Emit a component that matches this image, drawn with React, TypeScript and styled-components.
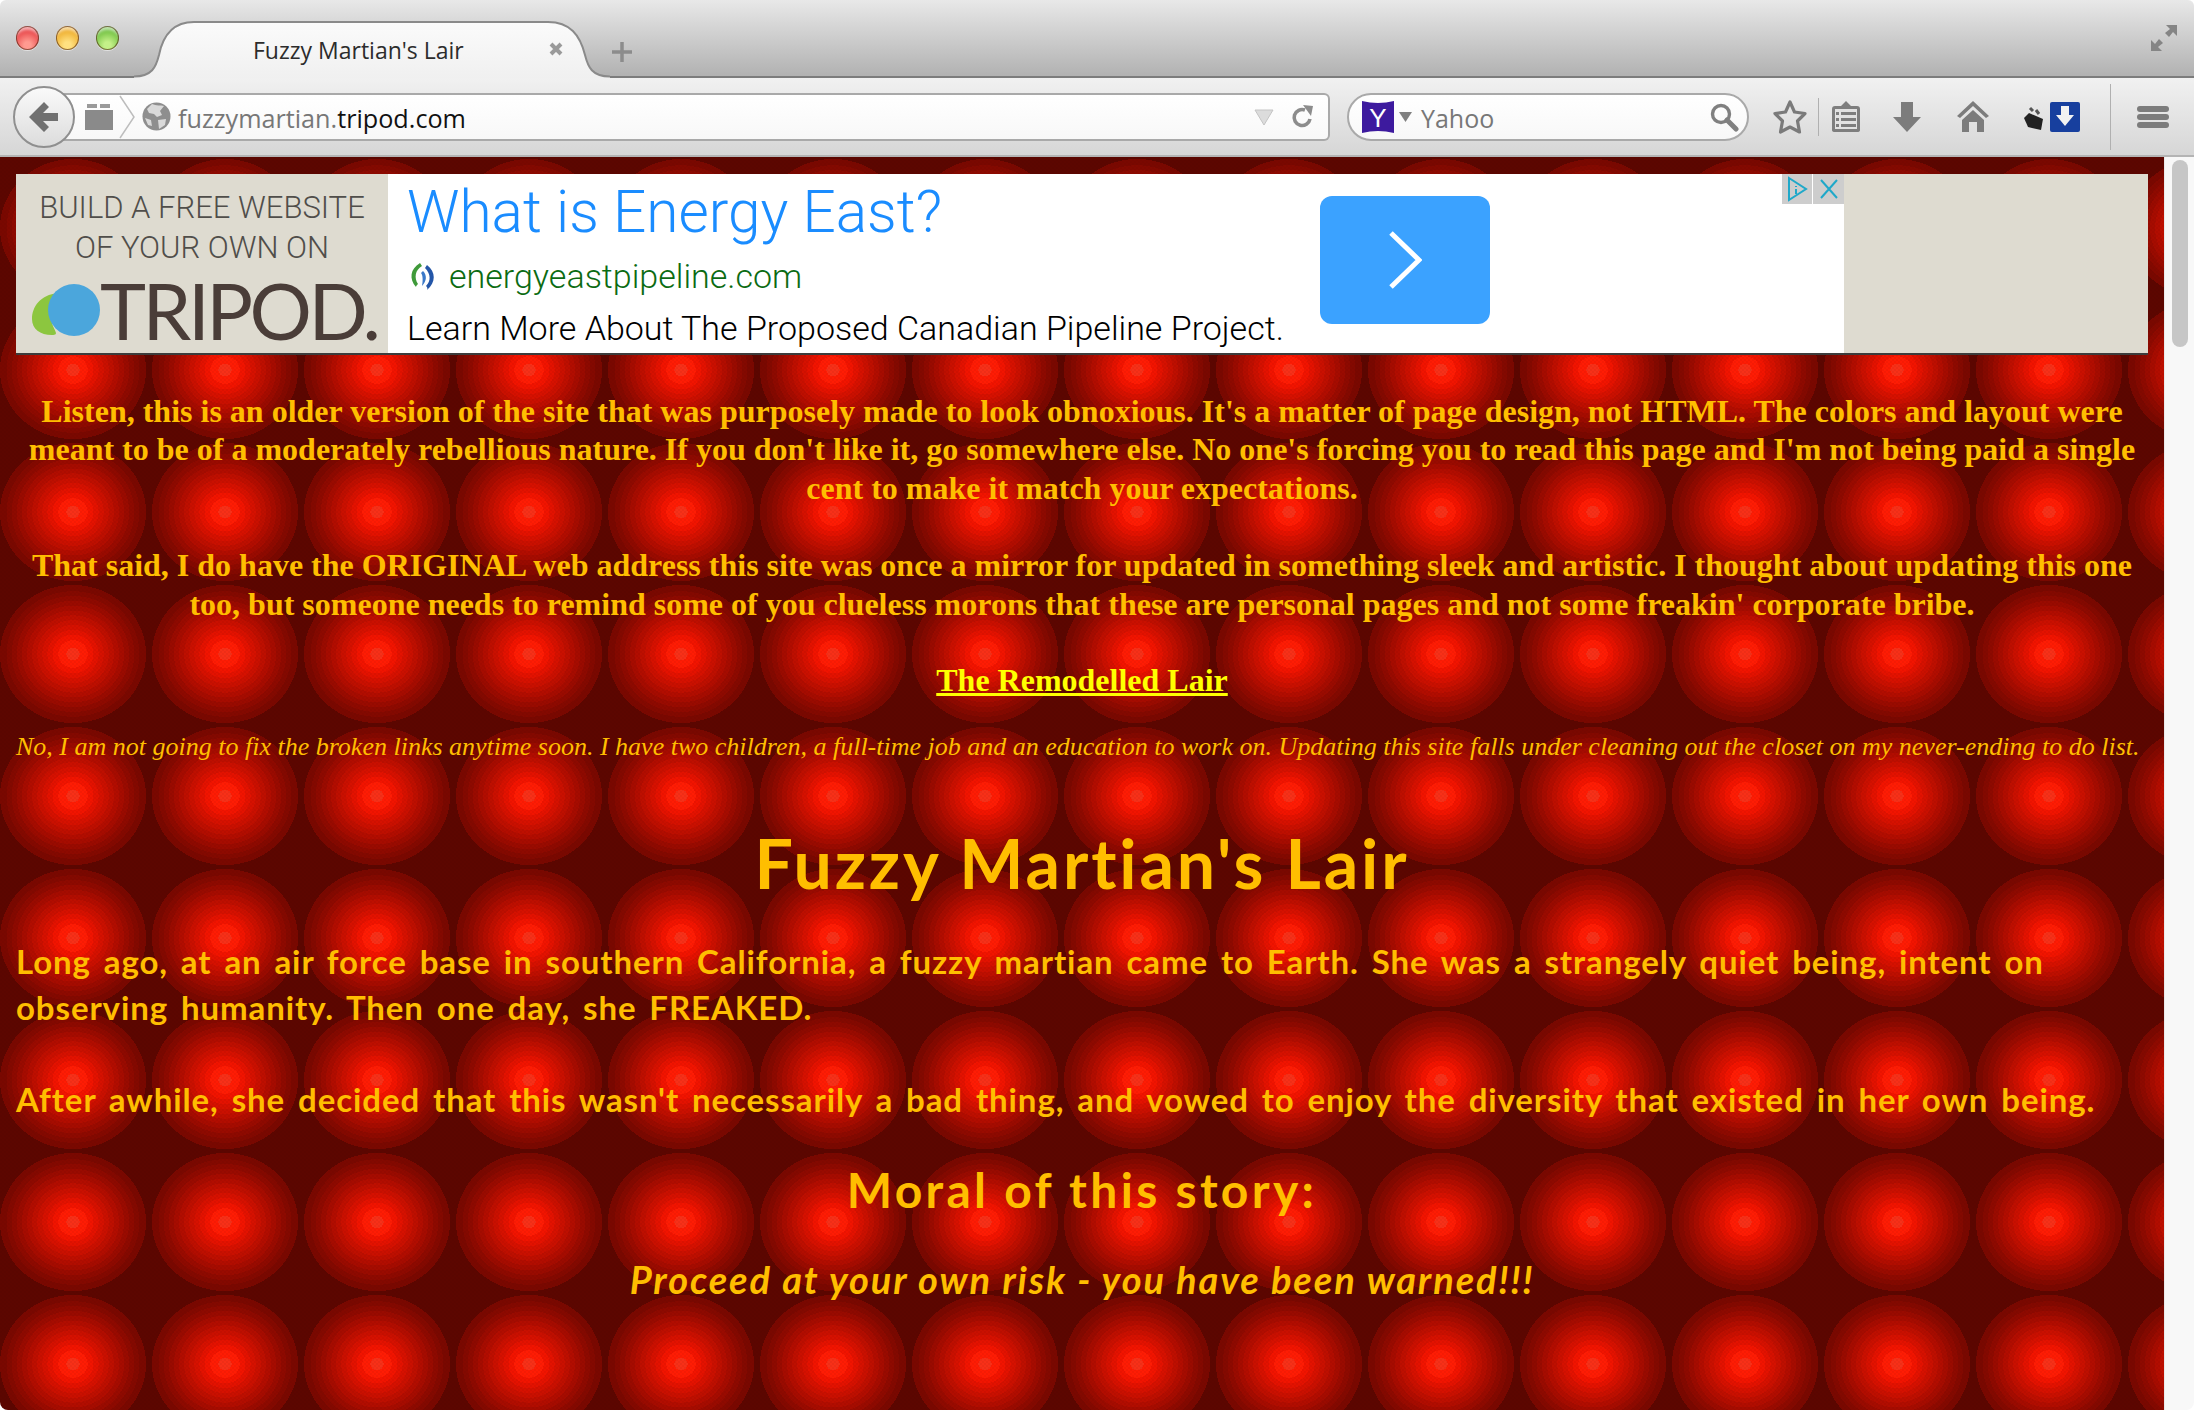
import React from 'react';
import styled, { createGlobalStyle } from 'styled-components';

const Global = createGlobalStyle`
  html, body { margin: 0; padding: 0; background: #fff; overflow: hidden; }
`;

const Browser = styled.div`
  width: 2194px;
  height: 1410px;
  display: flex;
  flex-direction: column;
  overflow: hidden;
  border-radius: 6px 6px 8px 8px;
`;

const TabStrip = styled.div`
  height: 78px;
  flex: none;
  display: flex;
  align-items: flex-end;
  position: relative;
  z-index: 2;
  box-sizing: border-box;
  padding-left: 16px;
  background: linear-gradient(#e8e8e8, #b0b0b0);
  box-shadow: inset 0 -2px 0 #7c7c7c;
`;

const Lights = styled.div`
  display: flex;
  gap: 17px;
  align-self: flex-start;
  margin-top: 26px;
  width: 118px;
  flex: none;
`;

const Light = styled.span<{ $c: string; $d: string }>`
  width: 23px;
  height: 24px;
  border-radius: 50%;
  background: radial-gradient(circle at 50% 80%, ${(p) => p.$c} 15%, ${(p) => p.$d} 85%);
  box-shadow: inset 0 0 0 1px rgba(70, 30, 10, 0.6), inset 0 6px 3px -2px rgba(255, 255, 255, 0.6), 0 1px 0 rgba(255, 255, 255, 0.5);
`;

const Tab = styled.div`
  position: relative;
  width: 476px;
  height: 57px;
  flex: none;
  display: flex;
  align-items: center;
  box-sizing: border-box;
  padding: 1px 0 0 119px;
`;

const TabShape = styled.svg`
  position: absolute;
  inset: 0;
  width: 100%;
  height: 100%;
`;

const TabTitle = styled.span`
  position: relative;
  font: 400 23px 'Open Sans', sans-serif;
  color: #2c2c2c;
  width: 295px;
  white-space: nowrap;
`;

const TabClose = styled.svg`
  position: relative;
  width: 16px;
  height: 16px;
  margin-top: -2px;
`;

const PlusIcon = styled.svg`
  width: 22px;
  height: 22px;
  margin: 0 0 15px 1px;
`;

const FullscreenIcon = styled.svg`
  position: absolute;
  right: 16px;
  top: 24px;
  width: 28px;
  height: 28px;
`;

const NavBar = styled.div`
  height: 79px;
  flex: none;
  display: flex;
  align-items: center;
  box-sizing: border-box;
  padding: 0 0 0 13px;
  background: linear-gradient(#f1f1f1, #d6d6d6);
  border-bottom: 2px solid #b4b4b4;
`;

const BackButton = styled.div`
  position: relative;
  z-index: 1;
  width: 62px;
  height: 62px;
  flex: none;
  box-sizing: border-box;
  border-radius: 50%;
  border: 2px solid #8f8f8f;
  background: linear-gradient(#fafafa, #dcdcdc);
  display: flex;
  align-items: center;
  justify-content: center;
`;

const UrlBar = styled.div`
  width: 1277px;
  height: 48px;
  margin-left: -22px;
  flex: none;
  display: flex;
  align-items: center;
  box-sizing: border-box;
  padding-left: 31px;
  background: linear-gradient(#fff, #f8f8f8);
  border: 2px solid #a9a9a9;
  border-left: none;
  border-radius: 0 6px 6px 0;
`;

const UrlText = styled.span`
  font: 400 25.2px 'Open Sans', sans-serif;
  color: #777;
  margin: 2px 0 0 7px;
  width: 1076px;
  flex: none;
  b { font-weight: 400; color: #111; }
`;

const SearchBar = styled.div`
  width: 402px;
  height: 48px;
  margin-left: 17px;
  flex: none;
  display: flex;
  align-items: center;
  box-sizing: border-box;
  padding-left: 13px;
  background: linear-gradient(#fff, #f8f8f8);
  border: 2px solid #a9a9a9;
  border-radius: 24px;
`;

const SearchText = styled.span`
  font: 400 25px 'Open Sans', sans-serif;
  color: #777;
  margin: 2px 0 0 9px;
  width: 288px;
  flex: none;
`;

const ToolIcon = styled.svg<{ $w: number; $ml: number }>`
  width: ${(p) => p.$w}px;
  height: 36px;
  flex: none;
  margin-left: ${(p) => p.$ml}px;
`;

const Separator = styled.span<{ $ml: number; $h: number }>`
  width: 1px;
  height: ${(p) => p.$h}px;
  flex: none;
  margin-left: ${(p) => p.$ml}px;
  background: #b0b0b0;
`;

const ContentRow = styled.div`
  flex: 1;
  display: flex;
  min-height: 0;
`;

const bands = `#f83018 0 9%, #ff1c04 9% 20%, #f21400 20% 28%, #e41200 28% 35%, #d61100 35% 42%, #ca1000 42% 49%, #be0f00 49% 56%, #b20d00 56% 63%, #a60c00 63% 70%, #9a0b00 70% 77%, #8e0a00 77% 84%, #840900 84% 91%, #7a0800 91% 100%, transparent 100%`;

const Page = styled.main`
  width: 2164px;
  flex: none;
  box-sizing: border-box;
  padding: 17px 16px 0;
  overflow: hidden;
  background-color: #5c0600;
  background-image:
    repeating-conic-gradient(rgba(60, 0, 0, 0.05) 0 25%, transparent 0 50%),
    radial-gradient(73px 69px at 73px 71px, ${bands});
  background-size: 4px 4px, 152px 142px;
`;

const Scrollbar = styled.div`
  flex: 1;
  background: #f8f8f8;
  border-left: 1px solid #eaeaea;
  padding: 3px 6px 0 7px;
`;

const ScrollThumb = styled.div`
  height: 187px;
  border-radius: 8px;
  background: #c6c6c6;
`;

const Ad = styled.section`
  height: 181px;
  width: 2132px;
  flex: none;
  display: flex;
  box-sizing: border-box;
  background: #dedbd0;
  border-bottom: 2px solid #3c3c3c;
`;

const AdPromo = styled.div`
  width: 372px;
  flex: none;
  box-sizing: border-box;
  padding-top: 14px;
  display: flex;
  flex-direction: column;
  align-items: center;
`;

const PromoLine = styled.div`
  font: 300 31px/40px 'Roboto', sans-serif;
  color: #504e4a;
  white-space: nowrap;
`;

const PromoLogo = styled.div`
  display: flex;
  align-items: center;
  align-self: flex-start;
  margin: 15px 0 0 16px;
`;

const LogoMark = styled.svg`
  width: 68px;
  height: 54px;
  flex: none;
`;

const LogoWord = styled.span`
  font: 400 78px/54px 'Lato', sans-serif;
  letter-spacing: -3.5px;
  color: #4a3d38;
  white-space: nowrap;
`;

const AdBody = styled.div`
  width: 1456px;
  flex: none;
  position: relative;
  background: #fff;
  display: flex;
  box-sizing: border-box;
  padding-left: 19px;
`;

const AdText = styled.div`
  width: 913px;
  flex: none;
`;

const AdTitle = styled.div`
  margin-top: 3px;
  font: 300 58.5px/70px 'Roboto', sans-serif;
  color: #1a8cff;
  white-space: nowrap;
`;

const AdSite = styled.div`
  display: flex;
  align-items: center;
  gap: 10px;
  margin-top: 9px;
  font: 300 34px/40px 'Roboto', sans-serif;
  color: #0b6b12;
  white-space: nowrap;
`;

const AdLine = styled.div`
  margin-top: 12px;
  font: 300 34px/40px 'Roboto', sans-serif;
  color: #000;
  white-space: nowrap;
`;

const AdButton = styled.div`
  width: 170px;
  height: 128px;
  margin-top: 22px;
  flex: none;
  border-radius: 12px;
  background: #3ba2ff;
  display: flex;
  align-items: center;
  justify-content: center;
`;

const AdChoices = styled.div`
  position: absolute;
  top: 0;
  right: 0;
  display: flex;
  gap: 1px;
`;

const AdChoice = styled.div<{ $w: number }>`
  width: ${(p) => p.$w}px;
  height: 30px;
  background: #cdcdcd;
  display: flex;
  align-items: center;
  justify-content: center;
`;

const SerifBlock = styled.p<{ $mt: number }>`
  margin: ${(p) => p.$mt}px 0 0;
  text-align: center;
  font: 700 32px/38.4px 'Liberation Serif', serif;
  color: #ffbe00;
  white-space: nowrap;
`;

const LairLink = styled.a`
  color: #ffff00;
  text-decoration: underline;
`;

const ItalicNote = styled.p`
  margin: 34px 0 0;
  font: italic 400 26px/28px 'Liberation Serif', serif;
  color: #ffbe00;
  white-space: nowrap;
`;

const ComicHeading = styled.h1`
  margin: 62px 0 0;
  text-align: center;
  font: 700 68px/80px 'Lato', sans-serif;
  letter-spacing: 2.85px;
  color: #ffbe00;
`;

const ComicText = styled.p<{ $mt: number }>`
  margin: ${(p) => p.$mt}px 0 0;
  font: 700 33px/46px 'Lato', sans-serif;
  letter-spacing: 0.9px;
  word-spacing: 4px;
  color: #ffbe00;
  white-space: nowrap;
`;

const MoralHeading = styled.h2`
  margin: 38px 0 0;
  text-align: center;
  font: 700 48px/60px 'Lato', sans-serif;
  letter-spacing: 3.3px;
  color: #ffbe00;
`;

const Warning = styled.p`
  margin: 36px 0 0;
  text-align: center;
  font: italic 700 38px/46px 'Lato', sans-serif;
  letter-spacing: 1.9px;
  color: #ffbe00;
`;

export default function App() {
  return (
    <Browser>
      <Global />
      <TabStrip>
        <Lights>
          <Light $c="#ff9a90" $d="#e02830" />
          <Light $c="#ffe080" $d="#e89c10" />
          <Light $c="#c4f088" $d="#54b028" />
        </Lights>
        <Tab>
          <TabShape viewBox="0 0 476 57" preserveAspectRatio="none">
            <defs>
              <linearGradient id="tabFill" x1="0" y1="0" x2="0" y2="1">
                <stop offset="0" stopColor="#fbfbfb" />
                <stop offset="1" stopColor="#f0f0f0" />
              </linearGradient>
            </defs>
            <path d="M0 56 C18 56 22 46 25 34 C29 14 40 1 60 1 L414 1 C436 1 446 14 451 34 C454 46 458 56 476 56 L476 57 L0 57 Z" fill="url(#tabFill)" />
            <path d="M0 55.5 C18 55.5 22 46 25 34 C29 14 40 1 60 1 L414 1 C436 1 446 14 451 34 C454 46 458 55.5 476 55.5" fill="none" stroke="#8a8a8a" strokeWidth="2" />
          </TabShape>
          <TabTitle>Fuzzy Martian's Lair</TabTitle>
          <TabClose viewBox="0 0 16 16">
            <path d="M3 3 L13 13 M13 3 L3 13" stroke="#9a9a9a" strokeWidth="4" />
          </TabClose>
        </Tab>
        <PlusIcon viewBox="0 0 22 22">
          <path d="M11 1 V21 M1 11 H21" stroke="#8c8c8c" strokeWidth="3.5" />
        </PlusIcon>
        <FullscreenIcon viewBox="0 0 28 28">
          <path d="M16 1 H27 V12 L23 8 L19 13 L15 9 L20 5 Z M1 27 V16 L5 20 L9 15 L13 19 L8 23 L12 27 Z" fill="#858585" />
        </FullscreenIcon>
      </TabStrip>

      <NavBar>
        <BackButton>
          <svg width="30" height="32" viewBox="0 0 30 32">
            <path d="M15 1 L20 6 L14 12 H29 V20 H14 L20 26 L15 31 L0 16 Z" fill="#707070" />
          </svg>
        </BackButton>
        <UrlBar>
          <svg width="30" height="28" viewBox="0 0 30 28">
            <path d="M3 1 H13 V5 H3 Z M16 1 H26 V5 H16 Z" fill="#9a9a9a" />
            <rect x="1" y="7" width="28" height="20" fill="#8a8a8a" />
          </svg>
          <svg width="17" height="44" viewBox="0 0 17 44" style={{ marginLeft: 5 }}>
            <path d="M1 1 L15 22 L1 43" fill="none" stroke="#bdbdbd" strokeWidth="1.5" />
          </svg>
          <svg width="29" height="29" viewBox="0 0 29 29" style={{ marginLeft: 6 }}>
            <circle cx="14.5" cy="14.5" r="14" fill="#8e8e8e" />
            <path d="M10 2 C14 4 19 3 22 4 L18 9 L20 13 L15 15 L12 12 L7 11 L5 7 Z M16 18 L24 17 L23 23 L17 27 Z M3 16 L9 18 L10 24 L6 23 Z" fill="#d9d9d9" />
          </svg>
          <UrlText>fuzzymartian.<b>tripod.com</b></UrlText>
          <svg width="20" height="18" viewBox="0 0 20 18" style={{ flex: 'none' }}>
            <path d="M1 2 H19 L10 17 Z" fill="#dcdcdc" stroke="#c4c4c4" />
          </svg>
          <svg width="24" height="26" viewBox="0 0 24 26" style={{ marginLeft: 17, flex: 'none' }}>
            <path d="M19 15 A8 8 0 1 1 14 6" fill="none" stroke="#8c8c8c" strokeWidth="3.6" />
            <path d="M12 1 L22 2 L20 12 Z" fill="#8c8c8c" />
          </svg>
        </UrlBar>
        <SearchBar>
          <svg width="32" height="32" viewBox="0 0 32 32">
            <path d="M0 0 Q16 4 32 0 V32 Q16 28 0 32 Z" fill="#3d1a9e" />
            <text x="16" y="26" textAnchor="middle" fontFamily="'Liberation Sans', sans-serif" fontSize="26" fill="#fff">Y</text>
          </svg>
          <svg width="13" height="10" viewBox="0 0 13 10" style={{ marginLeft: 5 }}>
            <path d="M0 0 H13 L6.5 10 Z" fill="#808080" />
          </svg>
          <SearchText>Yahoo</SearchText>
          <svg width="30" height="30" viewBox="0 0 30 30">
            <circle cx="12" cy="12" r="8.5" fill="none" stroke="#808080" strokeWidth="3.4" />
            <path d="M18 18 L27 27" stroke="#808080" strokeWidth="5" strokeLinecap="round" />
          </svg>
        </SearchBar>
        <ToolIcon $w={34} $ml={24} viewBox="0 0 34 36">
          <path d="M17 3 L21.5 13 L32 14.5 L24.5 22 L26.5 33 L17 28 L7.5 33 L9.5 22 L2 14.5 L12.5 13 Z" fill="none" stroke="#7a7a7a" strokeWidth="3.2" strokeLinejoin="round" />
        </ToolIcon>
        <Separator $ml={11} $h={38} />
        <ToolIcon $w={30} $ml={12} viewBox="0 0 30 36">
          <path d="M10 7 L15 2 L20 7 H26 Q29 7 29 10 V31 Q29 33 26 33 H4 Q1 33 1 31 V10 Q1 7 4 7 Z" fill="#7e7e7e" />
          <rect x="4" y="10" width="22" height="20" fill="#e2e2e2" />
          <path d="M5 13 h3 v3 h-3 Z M5 19 h3 v3 h-3 Z M5 25 h3 v3 h-3 Z M10 13 h15 v3 h-15 Z M10 19 h15 v3 h-15 Z M10 25 h15 v3 h-15 Z" fill="#7e7e7e" />
        </ToolIcon>
        <ToolIcon $w={28} $ml={32} viewBox="0 0 28 36">
          <path d="M8 3 H20 V18 H28 L14 33 L0 18 H8 Z" fill="#7c7c7c" />
        </ToolIcon>
        <ToolIcon $w={32} $ml={36} viewBox="0 0 32 36">
          <path d="M16 2 L32 17 L29 19 L16 7 L3 19 L0 17 Z" fill="#7c7c7c" />
          <path d="M16 11 L27 21 V33 H20 V23 H12 V33 H5 V21 Z" fill="#7c7c7c" />
        </ToolIcon>
        <ToolIcon $w={24} $ml={33} viewBox="0 0 24 36">
          <path d="M2 19 L7 14 L21 20 L19 31 L6 28 Z" fill="#222" />
          <path d="M8 9 L11 12 M14 11 L17 15" stroke="#555" strokeWidth="3" />
        </ToolIcon>
        <ToolIcon $w={30} $ml={4} viewBox="0 0 30 36">
          <rect x="0" y="3" width="30" height="30" rx="2" fill="#173f9e" />
          <path d="M11 7 H19 V16 H24 L15 27 L6 16 H11 Z" fill="#f2f2f2" />
        </ToolIcon>
        <Separator $ml={30} $h={66} />
        <ToolIcon $w={32} $ml={26} viewBox="0 0 32 36">
          <rect x="0" y="7" width="32" height="6" rx="3" fill="#7c7c7c" />
          <rect x="0" y="15" width="32" height="6" rx="3" fill="#7c7c7c" />
          <rect x="0" y="23" width="32" height="6" rx="3" fill="#7c7c7c" />
        </ToolIcon>
      </NavBar>

      <ContentRow>
        <Page>
          <Ad>
            <AdPromo>
              <PromoLine>BUILD A FREE WEBSITE</PromoLine>
              <PromoLine>OF YOUR OWN ON</PromoLine>
              <PromoLogo>
                <LogoMark viewBox="0 0 68 54">
                  <path d="M26 10 C8 12 0 24 0 36 C0 46 8 52 20 52 C28 52 22 48 20 40 C18 28 20 18 26 10 Z" fill="#8cc63f" />
                  <ellipse cx="42" cy="27" rx="26" ry="26" fill="#4ba6dc" />
                </LogoMark>
                <LogoWord>TRIPOD.</LogoWord>
              </PromoLogo>
            </AdPromo>
            <AdBody>
              <AdText>
                <AdTitle>What is Energy East?</AdTitle>
                <AdSite>
                  <svg width="32" height="32" viewBox="0 0 32 32">
                    <path d="M13 3 C3 9 2 19 9 27 C9 26 10 25 11 24 C7 18 8 10 15 6 Z" fill="#3f9a3a" />
                    <path d="M20 5 C29 12 29 22 20 30 C21 28 20 27 19 26 C24 21 24 14 18 8 Z" fill="#2456a8" />
                    <path d="M16 11 C20 15 20 21 15 26 C16 21 16 15 14 13 Z" fill="#3a78c8" />
                  </svg>
                  energyeastpipeline.com
                </AdSite>
                <AdLine>Learn More About The Proposed Canadian Pipeline Project.</AdLine>
              </AdText>
              <AdButton>
                <svg width="34" height="60" viewBox="0 0 34 60">
                  <path d="M3 3 L31 30 L3 57" fill="none" stroke="#fff" strokeWidth="5" />
                </svg>
              </AdButton>
              <AdChoices>
                <AdChoice $w={30}>
                  <svg width="24" height="26" viewBox="0 0 24 26">
                    <path d="M4 2 L21 13 L4 24 Z" fill="none" stroke="#1fa8c9" strokeWidth="2" />
                    <path d="M11 10 V11 M11 13 V18" stroke="#1fa8c9" strokeWidth="2" />
                  </svg>
                </AdChoice>
                <AdChoice $w={31}>
                  <svg width="22" height="22" viewBox="0 0 22 22">
                    <path d="M3 2 L19 20 M19 2 L3 20" stroke="#1fa8c9" strokeWidth="2" />
                  </svg>
                </AdChoice>
              </AdChoices>
            </AdBody>
          </Ad>

          <SerifBlock $mt={37}>
            Listen, this is an older version of the site that was purposely made to look obnoxious. It's a matter of page design, not HTML. The colors and layout were<br />
            meant to be of a moderately rebellious nature. If you don't like it, go somewhere else. No one's forcing you to read this page and I'm not being paid a single<br />
            cent to make it match your expectations.
          </SerifBlock>
          <SerifBlock $mt={39}>
            That said, I do have the ORIGINAL web address this site was once a mirror for updated in something sleek and artistic. I thought about updating this one<br />
            too, but someone needs to remind some of you clueless morons that these are personal pages and not some freakin' corporate bribe.
          </SerifBlock>
          <SerifBlock $mt={38}>
            <LairLink href="#">The Remodelled Lair</LairLink>
          </SerifBlock>
          <ItalicNote>
            No, I am not going to fix the broken links anytime soon. I have two children, a full-time job and an education to work on. Updating this site falls under cleaning out the closet on my never-ending to do list.
          </ItalicNote>
          <ComicHeading>Fuzzy Martian's Lair</ComicHeading>
          <ComicText $mt={35}>
            Long ago, at an air force base in southern California, a fuzzy martian came to Earth. She was a strangely quiet being, intent on<br />
            observing humanity. Then one day, she FREAKED.
          </ComicText>
          <ComicText $mt={46}>
            After awhile, she decided that this wasn't necessarily a bad thing, and vowed to enjoy the diversity that existed in her own being.
          </ComicText>
          <MoralHeading>Moral of this story:</MoralHeading>
          <Warning>Proceed at your own risk - you have been warned!!!</Warning>
        </Page>
        <Scrollbar>
          <ScrollThumb />
        </Scrollbar>
      </ContentRow>
    </Browser>
  );
}
